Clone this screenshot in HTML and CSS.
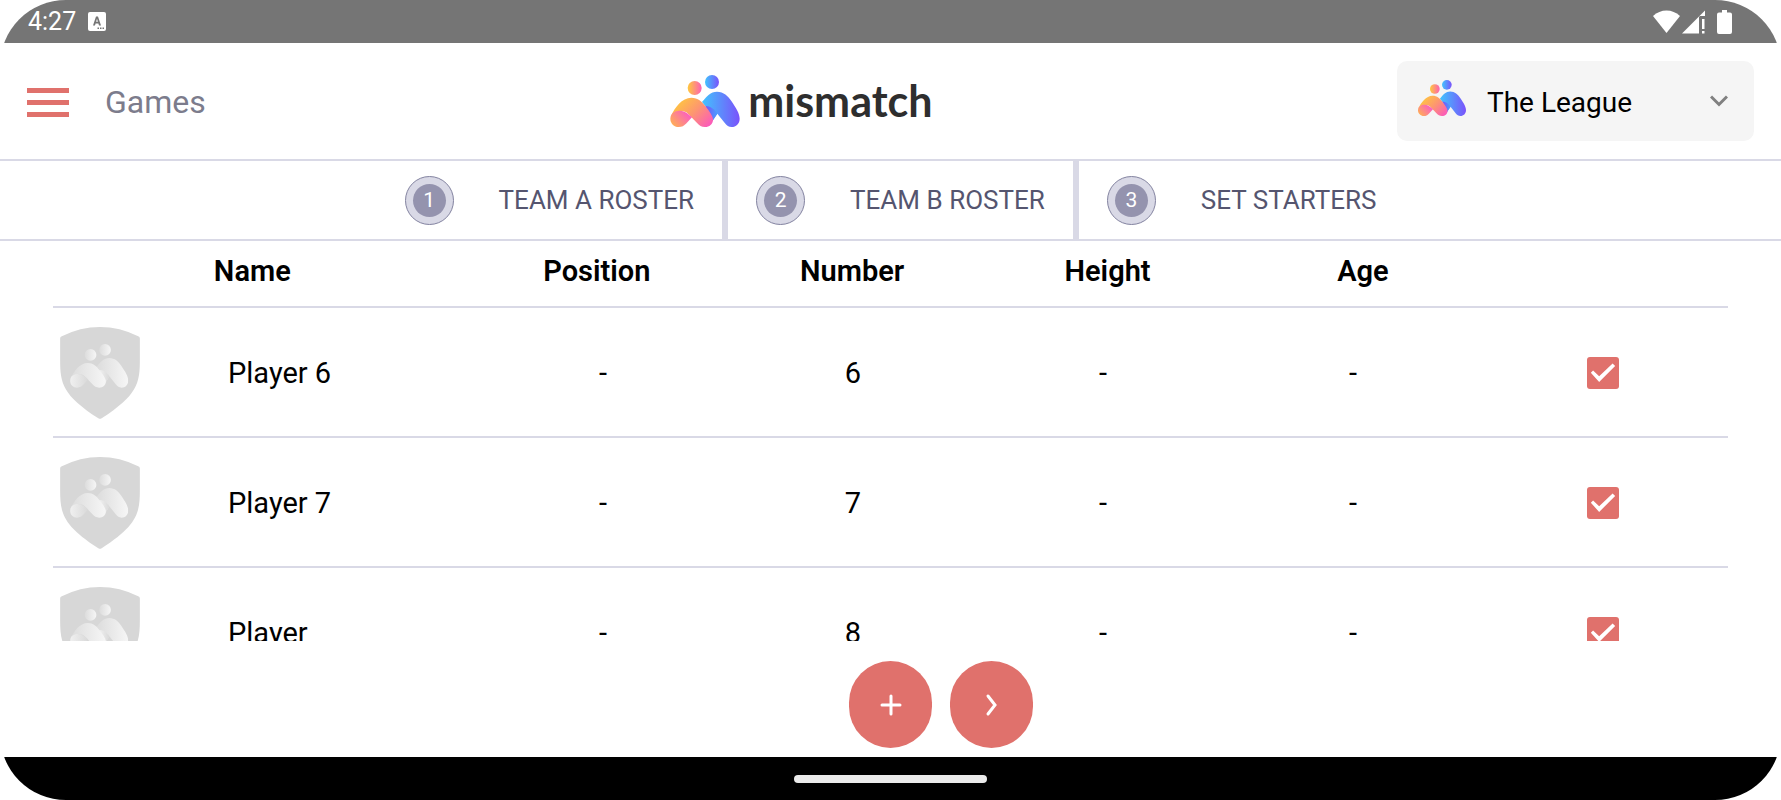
FILE: index.html
```html
<!DOCTYPE html>
<html lang="en">
<head>
    <meta charset="UTF-8">
    <meta name="viewport" content="width=device-width, initial-scale=1.0">
    <title>Games - mismatch</title>
    <link rel="stylesheet" href="styles.css">
</head>
<body>
    <!-- Shared shapes -->
    <svg class="defs" aria-hidden="true">
        <defs>
            <linearGradient id="warm"><stop offset="0" stop-color="#ffc93c"/><stop offset="1" stop-color="#fd5fb4"/></linearGradient>
            <linearGradient id="warm-body" x1="0.1" y1="0.2" x2="1" y2="0.8"><stop offset="0" stop-color="#ffc63f"/><stop offset="0.5" stop-color="#fd9670"/><stop offset="1" stop-color="#fb5cb8"/></linearGradient>
            <linearGradient id="warm-fold" x1="0" y1="0.8" x2="0.9" y2="0.2"><stop offset="0" stop-color="#ffb052"/><stop offset="1" stop-color="#fb5cc4"/></linearGradient>
            <linearGradient id="cool"><stop offset="0" stop-color="#41c4fd"/><stop offset="1" stop-color="#7a52fb"/></linearGradient>
            <linearGradient id="cool-fold"><stop offset="0" stop-color="#7a4ffb"/><stop offset="1" stop-color="#4a9dfd"/></linearGradient>
            <linearGradient id="grey"><stop offset="0" stop-color="#dcdcdc"/><stop offset="1" stop-color="#f6f6f6"/></linearGradient>
            <linearGradient id="grey-fold"><stop offset="0" stop-color="#f0f0f0"/><stop offset="1" stop-color="#d9d9d9"/></linearGradient>

            <circle id="head-left" cx="138" cy="114" r="21"/>
            <circle id="head-right" cx="190" cy="96" r="21"/>
            <path id="body-right" d="M160 156C175 138 185 125 205 125C225 125 238 138 248 153C262 174 273 190 273 206C273 221 262 231 249 231C240 231 234 227 229 220L206 191L191 213L172 171Z"/>
            <path id="fold-right" d="M170 168C185 168 198 178 206 191L191 214Z"/>
            <path id="body-left" d="M66 200C78 172 100 143 128 143C148 143 160 155 170 168C182 184 193 198 193 209C193 222 182 231 169 231C158 231 152 227 146 220L118 191C108 180 80 178 66 200Z"/>
            <path id="fold-left" d="M65 206C65 190 78 182 92 182C106 182 118 190 130 202L112 221C106 227 100 231 90 231C76 231 65 220 65 206Z"/>
        </defs>
        <symbol id="mark" viewBox="65 75 208 156">
            <use href="#head-left" fill="url(#warm)"/>
            <use href="#head-right" fill="url(#cool)"/>
            <use href="#body-right" fill="url(#cool)"/>
            <use href="#fold-right" fill="url(#cool-fold)"/>
            <use href="#body-left" fill="url(#warm-body)"/>
            <use href="#fold-left" fill="url(#warm-fold)"/>
        </symbol>
        <symbol id="mark-grey" viewBox="65 75 208 156">
            <use href="#head-left" fill="url(#grey)"/>
            <use href="#head-right" fill="url(#grey)"/>
            <use href="#body-right" fill="url(#grey)"/>
            <use href="#fold-right" fill="url(#grey-fold)"/>
            <use href="#body-left" fill="url(#grey)"/>
            <use href="#fold-left" fill="url(#grey-fold)"/>
        </symbol>
        <symbol id="shield" viewBox="0 0 240 277">
            <path fill="#d7d7d7" d="M0 34Q0 30 5 28Q60 0 120 0Q180 0 235 28Q240 30 240 34V100C240 170 232 205 125 275Q120 278 115 275C8 205 0 170 0 100Z"/>
            <use href="#mark-grey" x="30" y="50" width="175" height="134"/>
        </symbol>
    </svg>

    <div class="screen">
        <div class="status-bar">
            <span class="clock">4:27</span>
            <svg class="icon-app" viewBox="0 0 18 19">
                <rect width="18" height="19" rx="2" fill="#fff"/>
                <path d="M5 13.5L8 4.5H10L13 13.5H11L10.4 11.5H7.6L7 13.5ZM8.1 9.8H9.9L9 6.8Z" fill="#757575"/>
                <path d="M9.5 15.5H11V17H9.5ZM12 15.5H13.5V17H12ZM14.5 15.5H16V17H14.5Z" fill="#757575"/>
            </svg>
            <div class="status-icons">
                <svg class="icon-wifi" viewBox="0 0 27 23" fill="#fff"><path d="M0 6Q6 0.5 13.5 0.5Q21 0.5 27 6L13.5 23Z"/></svg>
                <svg class="icon-signal" viewBox="0 0 23 24" fill="#fff"><path d="M0 23.5L23 0.5V6H18L17 7V23.5ZM20 9H22.5V19H20ZM20 21H22.5V23.5H20Z"/></svg>
                <svg class="icon-battery" viewBox="0 0 15 24" fill="#fff"><path d="M5 0H10V2.5H13Q15 2.5 15 4.5V22Q15 24 13 24H2Q0 24 0 22V4.5Q0 2.5 2 2.5H5Z"/></svg>
            </div>
        </div>

        <header class="header">
            <div class="header-left">
                <button class="menu-button" aria-label="Open menu">
                    <span></span>
                    <span></span>
                    <span></span>
                </button>
                <h1 class="page-title">Games</h1>
            </div>
            <a class="logo" href="#">
                <svg class="logo-mark"><use href="#mark"/></svg>
                <span class="logo-text">mismatch</span>
            </a>
            <div class="league">
                <svg class="league-mark"><use href="#mark"/></svg>
                <select class="league-select" aria-label="League">
                    <option>The League</option>
                </select>
                <svg class="league-arrow" viewBox="0 0 18 12"><path d="M1 1.5L9 9.5L17 1.5" fill="none" stroke="#808080" stroke-width="3"/></svg>
            </div>
        </header>

        <nav class="steps">
            <button class="step"><span class="step-number"><span>1</span></span>TEAM A ROSTER</button>
            <button class="step"><span class="step-number"><span>2</span></span>TEAM B ROSTER</button>
            <button class="step"><span class="step-number"><span>3</span></span>SET STARTERS</button>
        </nav>

        <main class="roster">
            <table class="players">
                <thead>
                    <tr>
                        <td></td>
                        <th class="name">Name</th>
                        <th>Position</th>
                        <th>Number</th>
                        <th>Height</th>
                        <th>Age</th>
                        <td></td>
                    </tr>
                </thead>
                <tbody>
                    <tr>
                        <td class="badge"><svg><use href="#shield"/></svg></td>
                        <td class="name">Player 6</td>
                        <td>-</td>
                        <td>6</td>
                        <td>-</td>
                        <td>-</td>
                        <td><input type="checkbox" aria-label="Player 6" checked></td>
                    </tr>
                    <tr>
                        <td class="badge"><svg><use href="#shield"/></svg></td>
                        <td class="name">Player 7</td>
                        <td>-</td>
                        <td>7</td>
                        <td>-</td>
                        <td>-</td>
                        <td><input type="checkbox" aria-label="Player 7" checked></td>
                    </tr>
                    <tr>
                        <td class="badge"><svg><use href="#shield"/></svg></td>
                        <td class="name">Player</td>
                        <td>-</td>
                        <td>8</td>
                        <td>-</td>
                        <td>-</td>
                        <td><input type="checkbox" aria-label="Player" checked></td>
                    </tr>
                </tbody>
            </table>
        </main>

        <footer class="actions">
            <button class="round-button add" aria-label="Add player">
                <svg viewBox="0 0 24 24"><path d="M12 3V21M3 12H21"/></svg>
            </button>
            <button class="round-button next" aria-label="Next">
                <svg viewBox="0 0 24 24"><path d="M8 3L15 12L8 21"/></svg>
            </button>
        </footer>

        <div class="nav-bar"><span class="nav-pill"></span></div>
    </div>
</body>
</html>
```
FILE: styles.css
```css
* {
    box-sizing: border-box;
}
body {
    margin: 0;
    background: #fff;
    font-family: Roboto, "Liberation Sans", sans-serif;
    color: #000;
}
button, select {
    font: inherit;
    color: inherit;
    background: none;
    border: none;
    padding: 0;
    cursor: pointer;
}
svg {
    display: block;
    flex: none;
}
.defs {
    position: absolute;
    width: 0;
    height: 0;
}
.screen {
    display: flex;
    flex-direction: column;
    height: 100vh;
    border-radius: 66px;
    overflow: hidden;
}

/* Status bar */
.status-bar {
    display: flex;
    align-items: center;
    flex: none;
    height: 43px;
    padding: 0 49px 0 28px;
    background: #757575;
    color: #fff;
}
.clock {
    font-size: 25px;
    margin-right: 12px;
}
.icon-app { width: 18px; height: 19px; }
.icon-wifi { width: 27px; height: 23px; }
.icon-signal { width: 23px; height: 24px; margin-left: 2px; }
.icon-battery { width: 15px; height: 24px; margin-left: 12px; }
.status-icons {
    display: flex;
    align-items: center;
    margin-left: auto;
}

/* Header */
.header {
    display: flex;
    align-items: center;
    justify-content: space-between;
    flex: none;
    padding: 18px 27px;
    border-bottom: 2px solid #d9d9e6;
}
.header-left {
    display: flex;
    align-items: center;
    gap: 36px;
    padding-top: 2px;
}
.menu-button {
    display: flex;
    flex-direction: column;
    gap: 7px;
    width: 42px;
}
.menu-button span {
    height: 5px;
    background: #e0716c;
}
.page-title {
    margin: 0;
    font-size: 32px;
    font-weight: 400;
    color: #7c7c8c;
}
.logo {
    display: flex;
    align-items: center;
    gap: 8px;
    color: #2e2e2e;
    text-decoration: none;
}
.logo-mark {
    width: 70px;
    height: 52px;
}
.logo-text {
    font-family: Lato, sans-serif;
    font-size: 43px;
    font-weight: 700;
    line-height: 48px;
}
.league {
    display: flex;
    align-items: center;
    width: 357px;
    height: 80px;
    padding: 0 26px 0 21px;
    border-radius: 10px;
    background: #f5f5f5;
}
.league-mark {
    width: 48px;
    height: 36px;
    margin-bottom: 6px;
}
.league-select {
    flex: 1;
    margin-left: 21px;
    padding-top: 2px;
    appearance: none;
    font-size: 28px;
}
.league-arrow {
    width: 18px;
    height: 12px;
}

/* Steps */
.steps {
    display: flex;
    justify-content: center;
    flex: none;
    height: 80px;
    border-bottom: 2px solid #d9d9e6;
}
.step {
    display: flex;
    align-items: center;
    gap: 45px;
    padding: 0 28px;
    font-size: 26px;
    color: #55556f;
}
.step + .step {
    border-left: 6px solid #d9d9e6;
}
.step-number {
    display: flex;
    padding: 7px;
    border: 1px solid #8383a0;
    border-radius: 50%;
    background: #d9d9e6;
}
.step-number span {
    width: 33px;
    border-radius: 50%;
    background: #9493ae;
    color: #fff;
    font-size: 21px;
    line-height: 33px;
}

/* Roster */
.roster {
    flex: 1;
    min-height: 0;
    padding: 0 53px;
    overflow: hidden;
}
.players, .players thead, .players tbody {
    display: block;
}
.players tr {
    display: grid;
    grid-template-columns: 7fr repeat(6, 10fr);
    align-items: center;
    height: 130px;
    border-bottom: 2px solid #d9d9e6;
    font-size: 29px;
    text-align: center;
}
.players thead tr {
    grid-template-columns: 63fr repeat(5, 100fr) 93fr;
    height: 67px;
    padding-bottom: 6px;
}
.players th {
    padding: 0;
    font-weight: 600;
}
.players td {
    padding: 2px 0 0;
}
.players .name {
    text-align: left;
}
.badge {
    justify-self: start;
    margin-left: 7px;
}
.badge svg {
    width: 80px;
    height: 92px;
}
.players input {
    display: block;
    appearance: none;
    width: 32px;
    height: 32px;
    margin: 0 auto;
    border-radius: 3px;
    background: #e0716c;
}
.players input:checked::before {
    content: "";
    display: block;
    height: 100%;
    background: #fff;
    clip-path: polygon(12% 49%, 19% 42%, 38% 60%, 80% 20%, 88% 28%, 38% 78%);
}

/* Actions */
.actions {
    display: grid;
    grid-template-columns: 1fr auto 1fr;
    gap: 18px;
    flex: none;
    padding: 20px 0 9px;
}
.round-button {
    display: flex;
    align-items: center;
    justify-content: center;
    width: 83px;
    height: 87px;
    border-radius: 42px;
    background: #e0716c;
}
.add {
    grid-column: 2;
}
.round-button svg {
    width: 24px;
    height: 24px;
    fill: none;
    stroke: #fff;
    stroke-width: 3;
    stroke-linecap: round;
}

/* Gesture bar */
.nav-bar {
    display: flex;
    align-items: center;
    justify-content: center;
    flex: none;
    height: 43px;
    background: #000;
}
.nav-pill {
    width: 193px;
    height: 8px;
    border-radius: 4px;
    background: #ebebeb;
}
```
